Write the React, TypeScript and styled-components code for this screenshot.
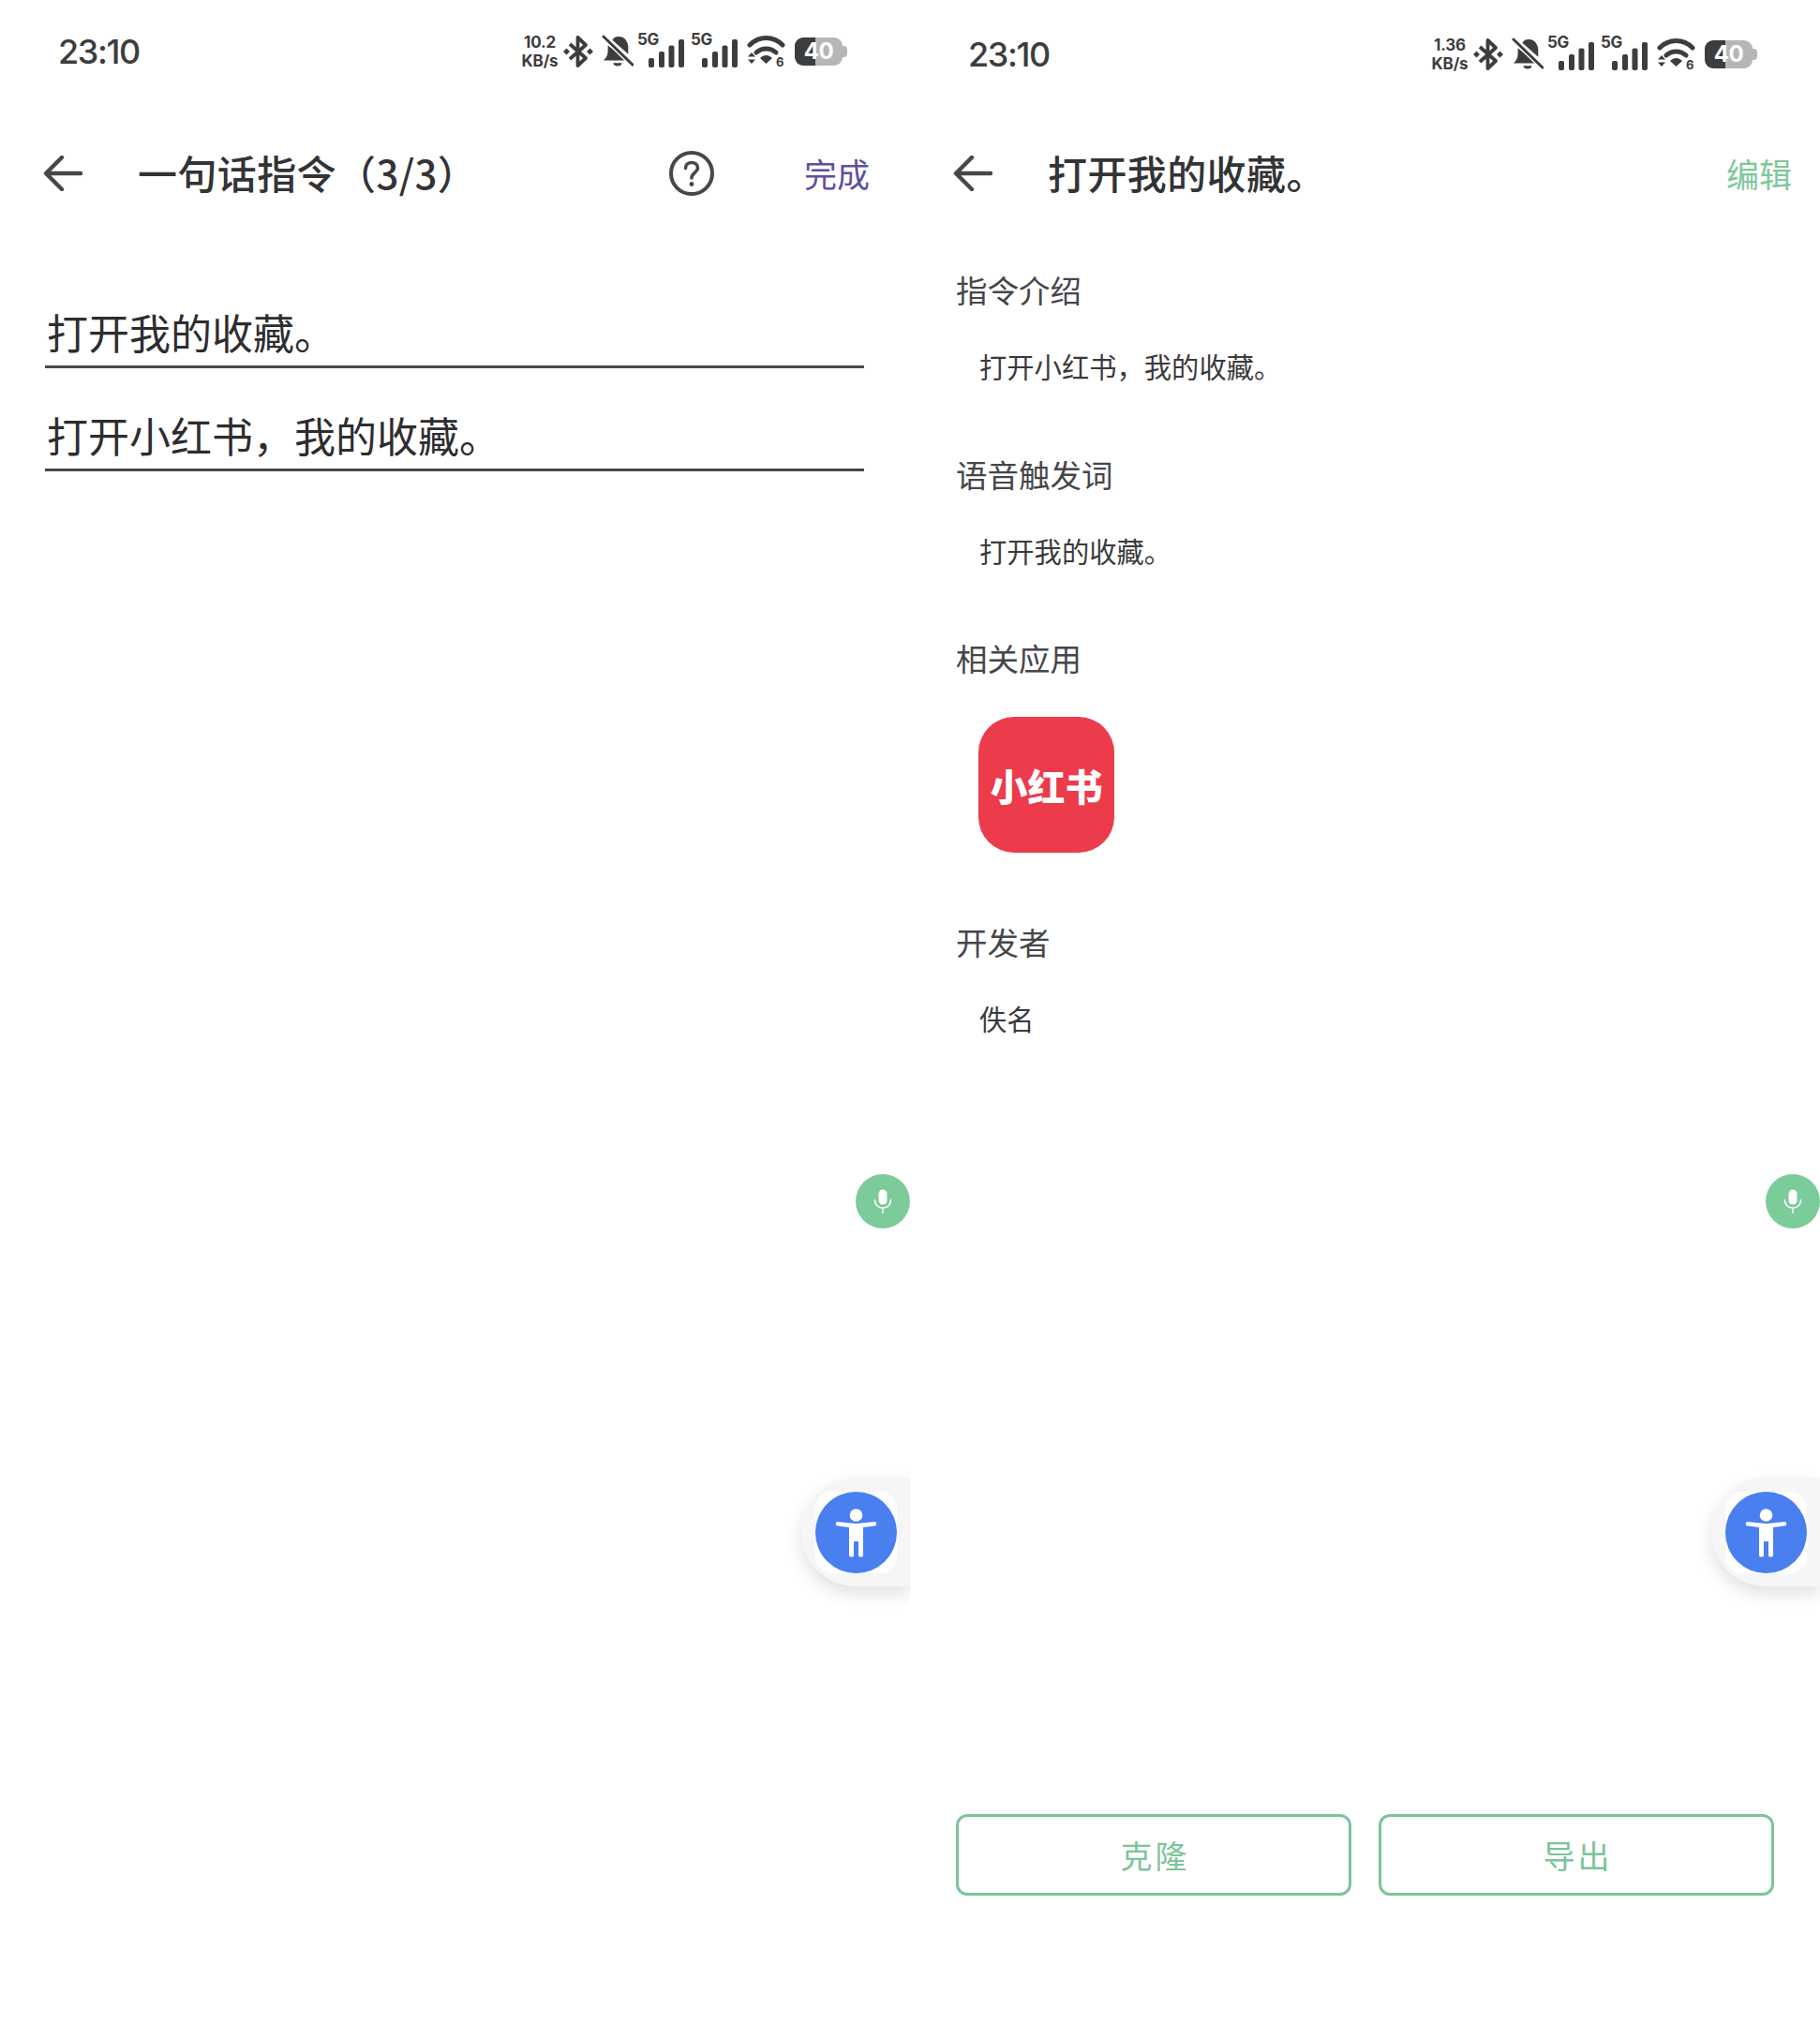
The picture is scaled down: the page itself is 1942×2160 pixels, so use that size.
import React from 'react'
import styled, { createGlobalStyle } from 'styled-components'

const GlobalStyle = createGlobalStyle`
  html, body {
    margin: 0;
    padding: 0;
    background: #fff;
  }
  body {
    font-family: "Noto Sans CJK SC", "Noto Sans", sans-serif;
    color: #3f3f42;
  }
`

const Page = styled.div`
  display: flex;
  width: 1942px;
  height: 2160px;
`

const Panel = styled.section`
  position: relative;
  display: flex;
  flex-direction: column;
  width: 971px;
  height: 2160px;
  overflow: hidden;
  background: #fff;
`

const StatusBar = styled.div<{ $shift: number }>`
  display: flex;
  align-items: center;
  box-sizing: border-box;
  height: 110px;
  padding: ${(p) => p.$shift}px 66px 0 62px;
  color: #3d3d3d;
`

const Time = styled.span`
  flex: 1;
  font-family: Inter, Roboto, sans-serif;
  font-size: 36px;
  font-weight: 500;
  letter-spacing: -1.4px;
`

const StatusIcons = styled.div`
  display: flex;
  align-items: center;
  height: 44px;
`

const Speed = styled.div`
  display: flex;
  flex-direction: column;
  align-items: center;
  flex: none;
  width: 42px;
  margin-right: 4px;
  font-family: Inter, Roboto, sans-serif;
  font-size: 17px;
  font-weight: 700;
  line-height: 20px;
  letter-spacing: -0.2px;
  white-space: nowrap;
`

const StatusGlyph = styled.svg<{ $left?: number }>`
  display: block;
  flex: none;
  margin-left: ${(p) => p.$left ?? 0}px;
`

const Battery = styled.div`
  position: relative;
  display: flex;
  align-items: center;
  justify-content: center;
  flex: none;
  width: 51px;
  height: 30px;
  margin-left: 10px;
  margin-right: 6px;
  border-radius: 9px;
  background: linear-gradient(90deg, #3d3d3d 0 22px, #b6b6b6 22px);
  color: #fff;
  font-family: Inter, Roboto, sans-serif;
  font-size: 24px;
  font-weight: 700;
  line-height: 30px;
  letter-spacing: -0.5px;

  &::after {
    content: '';
    position: absolute;
    top: 9px;
    right: -5px;
    width: 5px;
    height: 12px;
    border-radius: 0 4px 4px 0;
    background: #b6b6b6;
  }
`

const Header = styled.header<{ $inset: number }>`
  display: flex;
  align-items: center;
  height: 100px;
  margin-top: 25px;
  padding: 0 ${(p) => p.$inset}px 0 46px;
`

const BackIcon = styled.svg`
  display: block;
  flex: none;
  margin-right: 59px;
`

const Title = styled.h1`
  flex: 1;
  margin: -2px 0 0;
  font-size: 42px;
  font-weight: 500;
  line-height: 60px;
  letter-spacing: 0.4px;
  color: #333336;
`

const HelpIcon = styled.svg`
  display: block;
  flex: none;
  margin-right: 96px;
`

const HeaderAction = styled.span<{ $color: string }>`
  font-size: 35px;
  line-height: 50px;
  color: ${(p) => p.$color};
`

const Form = styled.div`
  display: flex;
  flex-direction: column;
  gap: 30px;
  padding: 78px 49px 0 48px;
`

const Field = styled.div`
  box-sizing: border-box;
  height: 80px;
  padding: 8px 0 0 2px;
  border-bottom: 3px solid #48484a;
  font-size: 44px;
  font-weight: 400;
  line-height: 66px;
  color: #2d2d30;
  white-space: nowrap;
`

const Detail = styled.div`
  display: flex;
  flex-direction: column;
  flex: 1;
  padding: 49px 0 0 49px;
`

const Section = styled.div<{ $gap: number }>`
  margin-bottom: ${(p) => p.$gap}px;
`

const Label = styled.h2`
  margin: 0;
  font-size: 33.5px;
  font-weight: 400;
  line-height: 50px;
  color: #46464a;
`

const Value = styled.p`
  margin: 34px 0 0 25px;
  font-size: 29.3px;
  line-height: 44px;
  color: #3a3a3d;
`

const AppIcon = styled.div`
  display: flex;
  align-items: center;
  justify-content: center;
  width: 145px;
  height: 145px;
  margin: 38px 0 0 24px;
  border-radius: 38px;
  background: #ec3b4a;
  color: #fff;
  font-size: 40px;
  font-weight: 900;
  line-height: 1;
`

const Actions = styled.div`
  display: flex;
  gap: 29px;
  margin-top: auto;
  padding: 0 49px 137px 0;
`

const OutlineButton = styled.button`
  flex: 1;
  height: 87px;
  padding: 0;
  border: 3px solid #7dc49a;
  border-radius: 12px;
  background: #fff;
  color: #7dc49a;
  font-family: inherit;
  font-size: 34px;
  letter-spacing: 3px;
  text-indent: 3px;
`

const MicBubble = styled.div`
  position: absolute;
  top: 1253px;
  right: 0;
  display: flex;
  align-items: center;
  justify-content: center;
  width: 58px;
  height: 58px;
  border-radius: 50%;
  background: #7ccb9a;
`

const AccessDock = styled.div`
  position: absolute;
  top: 1577px;
  right: 0;
  display: flex;
  align-items: center;
  box-sizing: border-box;
  width: 116px;
  height: 116px;
  padding-left: 15px;
  border-radius: 58px 0 0 58px;
  background: #f6f6f6;
  box-shadow: 0 8px 18px rgba(0, 0, 0, 0.12);
`

const AccessTile = styled.div`
  display: flex;
  align-items: center;
  justify-content: center;
  width: 87px;
  height: 87px;
  border-radius: 18px;
  background: #fff;
`

const AccessCircle = styled.div`
  display: flex;
  align-items: center;
  justify-content: center;
  width: 87px;
  height: 87px;
  border-radius: 50%;
  background: #4a7ff0;
`

const SignalWrap = styled.div<{ $left: number }>`
  position: relative;
  flex: none;
  width: 57px;
  height: 44px;
  margin-left: ${(p) => p.$left}px;
`

const Five = styled.span`
  position: absolute;
  top: 0;
  left: 0;
  font-family: Inter, Roboto, sans-serif;
  font-size: 17px;
  font-weight: 700;
  line-height: 18px;
  letter-spacing: -0.4px;
  white-space: nowrap;
`

const BarsIcon = styled.svg`
  position: absolute;
  right: 7px;
  bottom: 5px;
  display: block;
`

const Signal = ({ left }: { left: number }) => (
  <SignalWrap $left={left}>
    <Five>5G</Five>
    <BarsIcon width="38" height="30" viewBox="0 0 38 30" fill="#3d3d3d">
      <rect x="0" y="20" width="6" height="10" rx="2" />
      <rect x="11" y="13" width="6" height="17" rx="2" />
      <rect x="21.5" y="6.5" width="6" height="23.5" rx="2" />
      <rect x="32" y="0" width="6" height="30" rx="2" />
    </BarsIcon>
  </SignalWrap>
)

const Status = ({ speed, shift }: { speed: string; shift: number }) => (
  <StatusBar $shift={shift}>
    <Time>23:10</Time>
    <StatusIcons>
      <Speed>
        <span>{speed}</span>
        <span>KB/s</span>
      </Speed>
      <StatusGlyph width="32" height="36" viewBox="0 0 32 36" fill="none">
        <path
          d="M7 10 L24 25 L15.5 33 V3 L24 11 L7 26"
          stroke="#3d3d3d"
          strokeWidth="3.8"
          strokeLinejoin="round"
        />
        <path d="M3.5 14.5 L7 18 L3.5 21.5 L0 18Z M28.5 14.5 L32 18 L28.5 21.5 L25 18Z" fill="#3d3d3d" />
      </StatusGlyph>
      <StatusGlyph width="34" height="36" viewBox="0 0 36 36" $left={9}>
        <path
          d="M19 1 C27 1 30 8 30 13 V21 L12 5 C14 2 16 1 19 1Z M7 11 L30 28 H2 C6 25 7 21 7 17Z M13 31 H23 C22 35.5 14 35.5 13 31Z"
          fill="#3d3d3d"
        />
        <path d="M2 1 L35 33" stroke="#fff" strokeWidth="6" />
        <path d="M2 1 L35 33" stroke="#3d3d3d" strokeWidth="3" strokeLinecap="round" />
      </StatusGlyph>
      <Signal left={4} />
      <Signal left={0} />
      <StatusGlyph width="41" height="36" viewBox="0 0 41 36" fill="none" $left={3}>
        <path
          d="M3 11 C13 1 28 1 38 11"
          stroke="#3d3d3d"
          strokeWidth="5"
          strokeLinecap="round"
        />
        <path
          d="M10 19 C16 13.5 25 13.5 31 19"
          stroke="#3d3d3d"
          strokeWidth="5"
          strokeLinecap="round"
        />
        <path
          d="M14 25 C18 21 23 21 27 25 L20.5 31Z M1 23.5 L5 19 L9 23.5Z M1 26.5 H9 L5 31Z"
          fill="#3d3d3d"
        />
        <text
          x="31"
          y="34"
          fontSize="13"
          fontWeight="700"
          fontFamily="Inter, Roboto, sans-serif"
          fill="#3d3d3d"
        >
          6
        </text>
      </StatusGlyph>
      <Battery>40</Battery>
    </StatusIcons>
  </StatusBar>
)

const Back = () => (
  <BackIcon width="42" height="38" viewBox="0 0 42 38" fill="none">
    <path
      d="M40 19 H4 M20 2 L3 19 L20 36"
      stroke="#47474b"
      strokeWidth="4.4"
      strokeLinecap="round"
      strokeLinejoin="round"
    />
  </BackIcon>
)

const Floating = () => (
  <>
    <MicBubble>
      <svg width="20" height="26" viewBox="0 0 20 26" fill="none">
        <rect x="5.5" y="0.5" width="9" height="16" rx="4.5" fill="#fff" />
        <path
          d="M1.5 11.5 C1.5 23 18.5 23 18.5 11.5 M10 20 V25.5"
          stroke="#fff"
          strokeWidth="1.4"
          strokeLinecap="round"
        />
      </svg>
    </MicBubble>
    <AccessDock>
      <AccessTile>
        <AccessCircle>
          <svg width="87" height="87" viewBox="0 0 87 87" fill="#fff">
            <circle cx="43.5" cy="25" r="6.8" />
            <path d="M23 32 L43.5 34 L64 32 C65.6 32 65.6 36 64 36.2 L51 38 V68 C51 70 46 70 46 68 V53 H41 V68 C41 70 36 70 36 68 V38 L23 36.2 C21.4 36 21.4 32 23 32Z" />
          </svg>
        </AccessCircle>
      </AccessTile>
    </AccessDock>
  </>
)

export default function App() {
  return (
    <Page>
      <GlobalStyle />
      <Panel>
        <Status speed="10.2" shift={0} />
        <Header $inset={43}>
          <Back />
          <Title>一句话指令（3/3）</Title>
          <HelpIcon width="48" height="48" viewBox="0 0 48 48" fill="none">
            <circle cx="24" cy="24" r="22" stroke="#47474b" strokeWidth="4" />
            <path
              d="M17.5 18.5 C17.5 10.5 30.5 10.5 30.5 18.5 C30.5 23 24 23.5 24 29"
              stroke="#47474b"
              strokeWidth="3.6"
              strokeLinecap="round"
            />
            <circle cx="24" cy="35.5" r="2.4" fill="#47474b" />
          </HelpIcon>
          <HeaderAction $color="#5f4fa0">完成</HeaderAction>
        </Header>
        <Form>
          <Field>打开我的收藏。</Field>
          <Field>打开小红书，我的收藏。</Field>
        </Form>
        <Floating />
      </Panel>
      <Panel>
        <Status speed="1.36" shift={6} />
        <Header $inset={30}>
          <Back />
          <Title>打开我的收藏。</Title>
          <HeaderAction $color="#7dc99a">编辑</HeaderAction>
        </Header>
        <Detail>
          <Section $gap={69}>
            <Label>指令介绍</Label>
            <Value>打开小红书，我的收藏。</Value>
          </Section>
          <Section $gap={68}>
            <Label>语音触发词</Label>
            <Value>打开我的收藏。</Value>
          </Section>
          <Section $gap={70}>
            <Label>相关应用</Label>
            <AppIcon>小红书</AppIcon>
          </Section>
          <Section $gap={0}>
            <Label>开发者</Label>
            <Value>佚名</Value>
          </Section>
          <Actions>
            <OutlineButton>克隆</OutlineButton>
            <OutlineButton>导出</OutlineButton>
          </Actions>
        </Detail>
        <Floating />
      </Panel>
    </Page>
  )
}
